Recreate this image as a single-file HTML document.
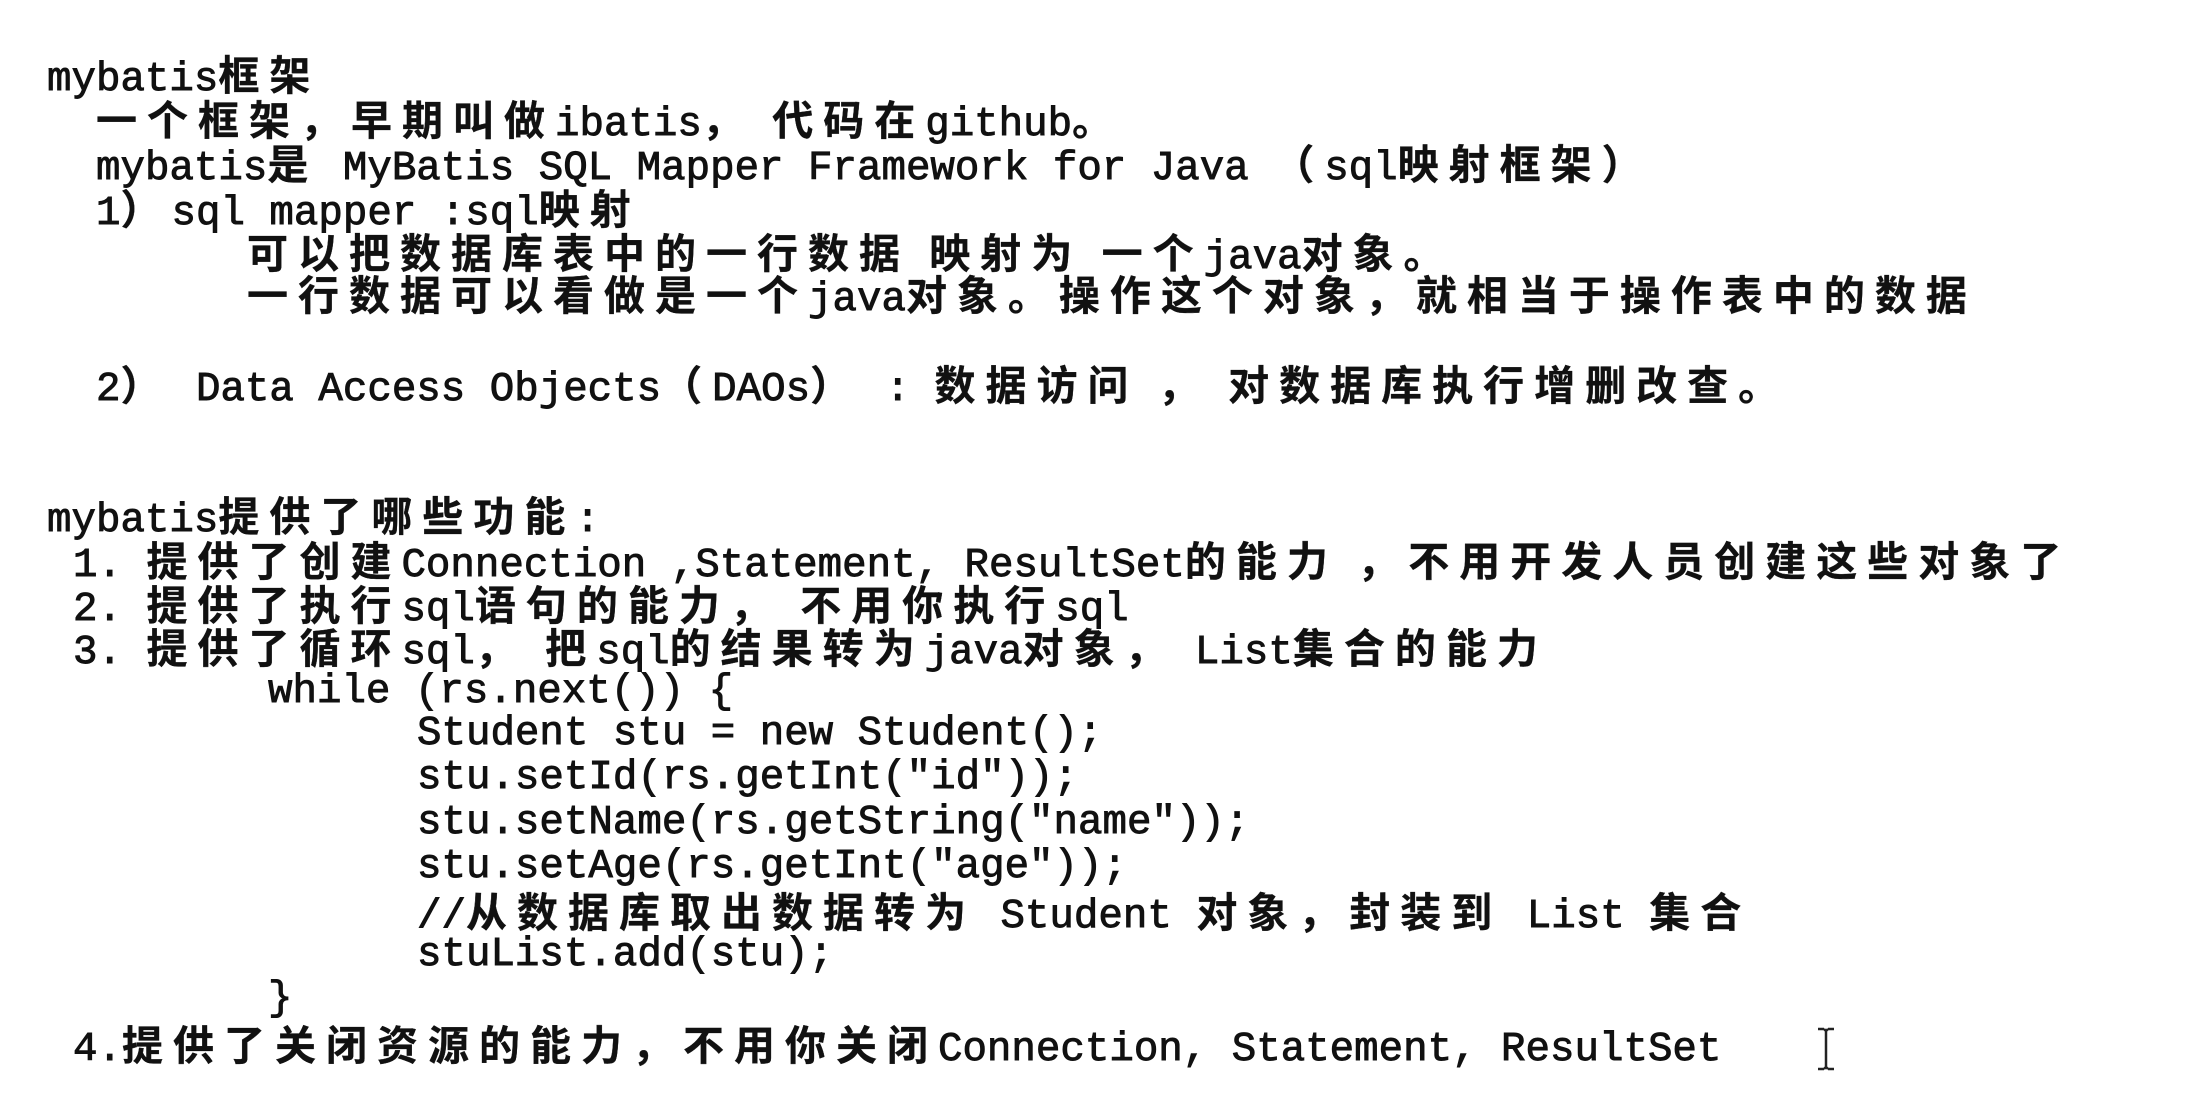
<!DOCTYPE html>
<html><head><meta charset="utf-8"><style>
html,body{margin:0;padding:0;background:#fff;width:2204px;height:1105px;overflow:hidden}
.l{position:absolute;white-space:pre;font-family:"Liberation Mono","Noto Sans CJK SC",monospace;font-size:40.8px;line-height:44px;color:#111;-webkit-text-stroke:0.9px #111}
b{font-family:"Noto Sans CJK SC","WenQuanYi Zen Hei",sans-serif;font-weight:bold;font-size:41px;letter-spacing:10px;line-height:44px;-webkit-text-stroke:0.3px #111}
</style></head><body>
<div class="l" style="left:47px;top:50px">mybatis<b>框架</b></div>
<div class="l" style="left:96px;top:95px"><b>一个框架，早期叫做</b>ibatis<b>， 代码在</b>github<b>。</b></div>
<div class="l" style="left:96px;top:139px">mybatis<b>是</b> MyBatis SQL Mapper Framework for Java <b>（</b>sql<b>映射框架）</b></div>
<div class="l" style="left:96px;top:184px">1<b>）</b>sql mapper :sql<b>映射</b></div>
<div class="l" style="left:247px;top:228px"><b>可以把数据库表中的一行数据 映射为 一个</b>java<b>对象。</b></div>
<div class="l" style="left:247px;top:270px"><b>一行数据可以看做是一个</b>java<b>对象。操作这个对象，就相当于操作表中的数据</b></div>
<div class="l" style="left:96px;top:360px">2<b>）</b> Data Access Objects<b>（</b>DAOs<b>）</b> : <b>数据访问 ， 对数据库执行增删改查。</b></div>
<div class="l" style="left:47px;top:491px">mybatis<b>提供了哪些功能</b>:</div>
<div class="l" style="left:73px;top:536px">1. <b>提供了创建</b>Connection ,Statement, ResultSet<b>的能力 ，不用开发人员创建这些对象了</b></div>
<div class="l" style="left:73px;top:580px">2. <b>提供了执行</b>sql<b>语句的能力， 不用你执行</b>sql</div>
<div class="l" style="left:73px;top:623px">3. <b>提供了循环</b>sql<b>， 把</b>sql<b>的结果转为</b>java<b>对象， </b>List<b>集合的能力</b></div>
<div class="l" style="left:268px;top:670px">while (rs.next()) {</div>
<div class="l" style="left:417px;top:712px">Student stu = new Student();</div>
<div class="l" style="left:417px;top:756px">stu.setId(rs.getInt("id"));</div>
<div class="l" style="left:417px;top:801px">stu.setName(rs.getString("name"));</div>
<div class="l" style="left:417px;top:845px">stu.setAge(rs.getInt("age"));</div>
<div class="l" style="left:417px;top:887px">//<b>从数据库取出数据转为</b> Student <b>对象，封装到</b> List <b>集合</b></div>
<div class="l" style="left:417px;top:933px">stuList.add(stu);</div>
<div class="l" style="left:268px;top:977px">}</div>
<div class="l" style="left:73px;top:1020px">4.<b>提供了关闭资源的能力，不用你关闭</b>Connection, Statement, ResultSet</div>
<svg style="position:absolute;left:1815px;top:1026px" width="22" height="46" viewBox="0 0 22 46"><path d="M3 3h6M13 3h6M11 4v38M3 43h6M13 43h6M9 3l2 2 2-2M9 43l2-2 2 2" stroke="#222" stroke-width="2.5" fill="none"/></svg>
</body></html>
